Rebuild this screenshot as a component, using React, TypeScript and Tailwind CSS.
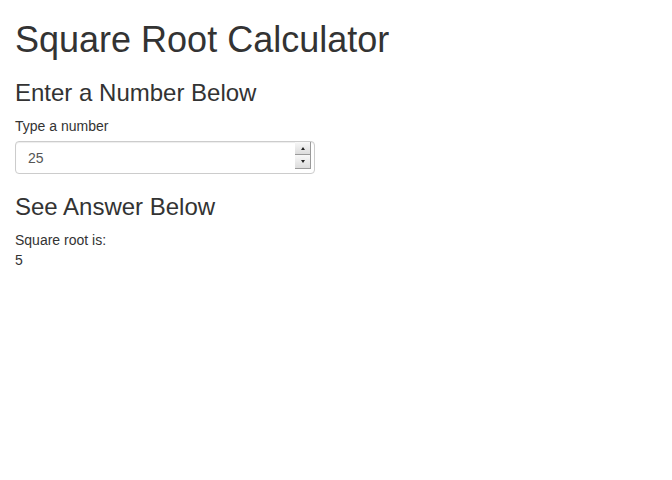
import React from "react";

export default function App() {
  return (
    <div
      className="min-h-[480px] bg-white px-[15px] text-[14px] leading-[20px] text-[#333333]"
      style={{ fontFamily: '"Liberation Sans", Helvetica, Arial, sans-serif' }}
    >
      <h1 className="mt-[20px] mb-[10px] text-[36px] leading-[39.6px] font-normal">
        Square Root Calculator
      </h1>
      <h3 className="mt-[20px] mb-[10px] text-[24px] leading-[26.4px] font-normal">
        Enter a Number Below
      </h3>
      <div className="mb-[15px]">
        <label className="mb-[5px] block font-normal">Type a number</label>
        <div className="relative w-[300px]">
          <input
            type="text"
            defaultValue="25"
            readOnly
            className="block h-[33px] w-full rounded-[4px] border border-[#cccccc] bg-white px-[12px] py-[6px] text-[14px] text-[#555555] shadow-[inset_0_1px_1px_rgba(0,0,0,0.075)] outline-none"
            style={{ fontFamily: '"Liberation Sans", Helvetica, Arial, sans-serif' }}
          />
          <div className="absolute right-[4px] top-[1px] flex w-[16px] flex-col">
            <div className="flex h-[13px] items-center justify-center border-r border-b border-[#9a9a9a] bg-gradient-to-b from-[#f8f8f8] to-[#dcdcdc]">
              <div className="h-0 w-0 border-x-[2px] border-b-[3px] border-x-transparent border-b-[#222]" />
            </div>
            <div className="flex h-[14px] items-center justify-center border-r border-b border-[#9a9a9a] bg-gradient-to-b from-[#f8f8f8] to-[#dcdcdc]">
              <div className="h-0 w-0 border-x-[2px] border-t-[3px] border-x-transparent border-t-[#222]" />
            </div>
          </div>
        </div>
      </div>
      <h3 className="mt-[20px] mb-[10px] text-[24px] leading-[26.4px] font-normal">
        See Answer Below
      </h3>
      <div>Square root is:</div>
      <div>5</div>
    </div>
  );
}
